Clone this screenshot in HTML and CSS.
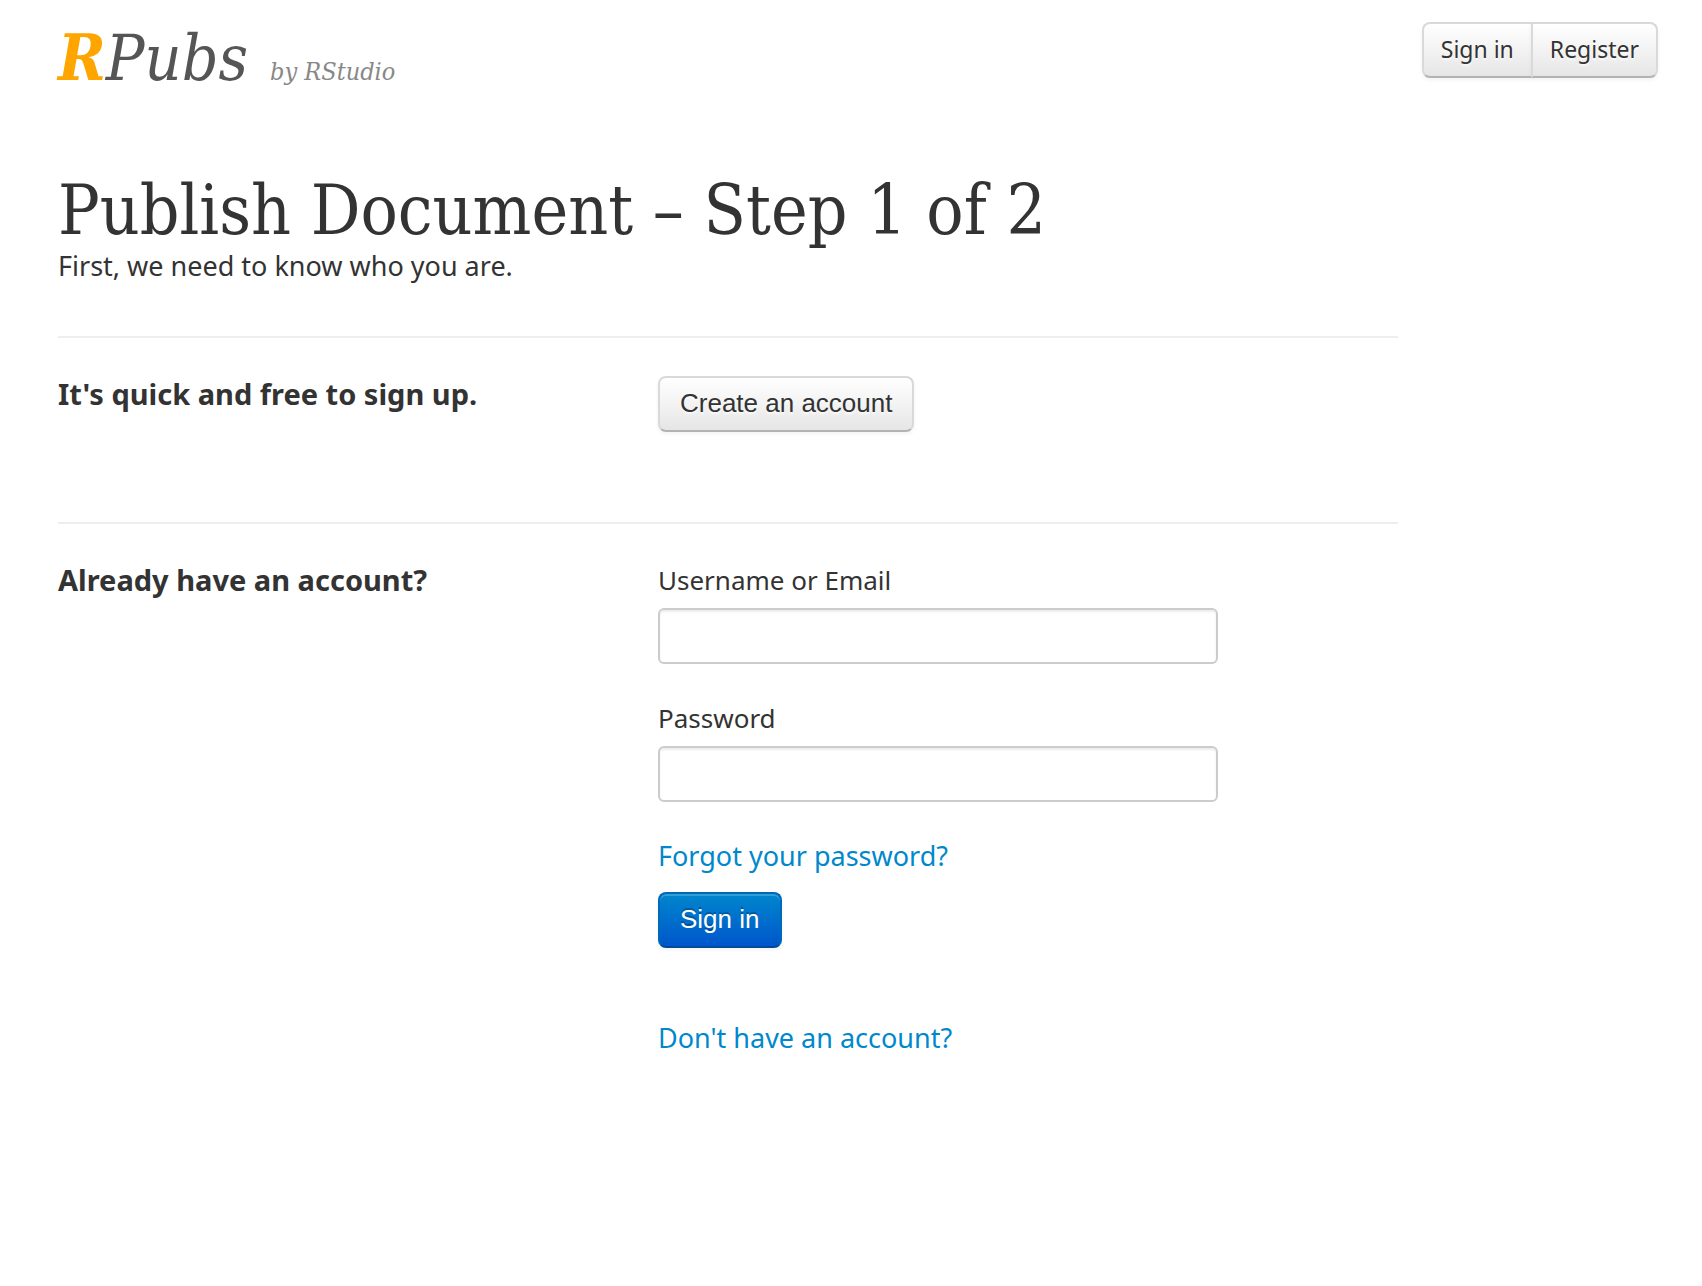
FILE: index.html
```
<!DOCTYPE html>
<html lang="en">
<head>
<meta charset="utf-8">
<meta name="viewport" content="width=device-width, initial-scale=1">
<title>RPubs - Publish Document</title>
<link rel="stylesheet" href="styles.css">
</head>
<body>
<header class="site-header">
  <a class="brand" href="#"><span class="brand-name"><b class="brand-initial">R</b>Pubs</span><span class="brand-by">by RStudio</span></a>
  <nav class="btn-group" aria-label="Account">
    <a class="btn" href="#">Sign in</a>
    <a class="btn" href="#">Register</a>
  </nav>
</header>
<main class="content">
  <h1 class="page-title">Publish Document – Step 1 of 2</h1>
  <p class="lead">First, we need to know who you are.</p>
  <section class="row row-signup">
    <h2 class="row-title">It's quick and free to sign up.</h2>
    <div class="row-body"><button class="btn" type="button">Create an account</button></div>
  </section>
  <section class="row">
    <h2 class="row-title">Already have an account?</h2>
    <form class="row-body">
      <label class="label" for="username">Username or Email</label>
      <input class="field" id="username" type="text">
      <label class="label" for="password">Password</label>
      <input class="field" id="password" type="password">
      <a class="link" href="#">Forgot your password?</a>
      <button class="btn btn-primary" type="submit">Sign in</button>
      <a class="link link-register" href="#">Don't have an account?</a>
    </form>
  </section>
</main>
</body>
</html>
```
FILE: styles.css
```
* { box-sizing: border-box; }

body {
  margin: 0;
  padding: 22px 44px 60px 58px;
  background: #fff;
  color: #333;
  font: 26px/36px "Noto Sans", "Open Sans", sans-serif;
}

a { color: #0088cc; text-decoration: none; }

.site-header {
  display: flex;
  justify-content: space-between;
  align-items: flex-start;
}

.brand {
  display: flex;
  align-items: baseline;
  gap: 22px;
  font-family: "DejaVu Serif Condensed", "DejaVu Serif", serif;
  font-style: italic;
  line-height: 72px;
}
.brand-name { font-size: 64px; color: #555; }
.brand-initial { color: #ffa500; }
.brand-by { font-size: 25px; color: #888; }

.btn {
  display: inline-block;
  height: 56px;
  padding: 7px 20px 9px;
  border: 2px solid #d9d9d9;
  border-bottom-color: #b3b3b3;
  border-radius: 8px;
  background: linear-gradient(#fff, #e6e6e6);
  box-shadow: inset 0 2px 0 rgba(255, 255, 255, .2), 0 2px 4px rgba(0, 0, 0, .05);
  color: #333;
  font: 26px/36px "Liberation Sans", Arial, sans-serif;
  text-shadow: 0 2px 2px rgba(255, 255, 255, .75);
  cursor: pointer;
}

.btn-group { display: flex; }
.btn-group .btn { padding: 7px 17px 9px; font: 23px/36px "Noto Sans", "Open Sans", sans-serif; }
.btn-group .btn:first-child { border-radius: 8px 0 0 8px; }
.btn-group .btn:last-child { margin-left: -2px; border-radius: 0 8px 8px 0; }

.btn-primary {
  border-color: #0068b8 #0068b8 #00499c;
  background: linear-gradient(#0088cc, #0055cc) border-box;
  color: #fff;
  text-shadow: 0 -2px 0 rgba(0, 0, 0, .25);
}

.content { max-width: 1340px; padding-top: 66px; }

.page-title {
  margin: 0;
  font: 400 69px/72px "DejaVu Serif Condensed", "DejaVu Serif", serif;
}

.lead { margin: 2px 0 52px; font-size: 27px; }

.row {
  display: grid;
  grid-template-columns: 600px minmax(0, 560px);
  padding-top: 38px;
  border-top: 2px solid #eee;
}
.row-signup { padding-bottom: 90px; }
.row-title { margin: 0; font-size: 29px; line-height: 36px; }

.row-body { display: flex; flex-direction: column; align-items: flex-start; }
.label { margin-bottom: 10px; }
.field {
  width: 100%;
  height: 56px;
  margin-bottom: 36px;
  padding: 8px;
  border: 2px solid #ccc;
  border-radius: 6px;
  background: #fff;
  box-shadow: inset 0 2px 2px rgba(0, 0, 0, .075);
  color: #555;
  font: inherit;
}
.link { font-size: 27px; }
.btn-primary { margin-top: 18px; }
.link-register { margin-top: 72px; }
```
